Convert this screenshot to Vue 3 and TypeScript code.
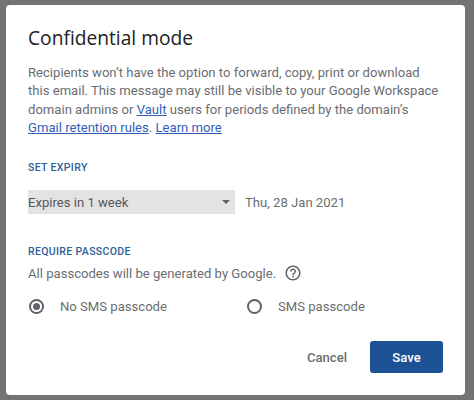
<script setup lang="ts">
const title = 'Confidential mode'
</script>

<template>
  <div class="page">
    <section class="dialog">
      <h1 class="title">{{ title }}</h1>
      <p class="body">
        Recipients won’t have the option to forward, copy, print or download<br />
        this email. This message may still be visible to your Google Workspace<br />
        domain admins or <a>Vault</a> users for periods defined by the domain’s<br />
        <a>Gmail retention rules</a>. <a>Learn more</a>
      </p>
      <h2 class="label expiry-label">SET EXPIRY</h2>
      <div class="expiry-row">
        <div class="select">
          <span>Expires in 1 week</span>
          <i class="caret"></i>
        </div>
        <span class="date">Thu, 28 Jan 2021</span>
      </div>
      <h2 class="label pass-label">REQUIRE PASSCODE</h2>
      <div class="note">
        <span>All passcodes will be generated by Google.</span>
        <svg class="help" width="18" height="18" viewBox="0 0 24 24" fill="#5f6368">
          <path d="M11 18h2v-2h-2v2zm1-16C6.48 2 2 6.48 2 12s4.48 10 10 10 10-4.48 10-10S17.52 2 12 2zm0 18c-4.41 0-8-3.59-8-8s3.59-8 8-8 8 3.59 8 8-3.59 8-8 8zm0-14c-2.21 0-4 1.79-4 4h2c0-1.1.9-2 2-2s2 .9 2 2c0 2-3 1.75-3 5h2c0-2.25 3-2.5 3-5 0-2.21-1.79-4-4-4z" />
        </svg>
      </div>
      <div class="radios">
        <div class="radio-item first">
          <span class="radio checked"></span>
          <span>No SMS passcode</span>
        </div>
        <div class="radio-item">
          <span class="radio"></span>
          <span>SMS passcode</span>
        </div>
      </div>
      <div class="actions">
        <button class="cancel">Cancel</button>
        <button class="save">Save</button>
      </div>
    </section>
  </div>
</template>

<style>
html, body { margin: 0; background: #737373; }
</style>

<style scoped>
.page {
  width: 474px;
  height: 400px;
  box-sizing: border-box;
  padding: 5px 9px 5px 6px;
  background: #737373;
  font-family: Roboto, "Liberation Sans", sans-serif;
  overflow: hidden;
}
.dialog {
  height: 390px;
  box-sizing: border-box;
  padding: 19px 22px 0;
  background: #fff;
  border-radius: 4px;
  color: #6a6d71;
  font-size: 13.1px;
}
.title {
  margin: 0;
  font-family: "Open Sans", Roboto, sans-serif;
  font-weight: 400;
  font-size: 19.2px;
  line-height: 28px;
  color: #202124;
}
.body {
  margin: 12px 0 0;
  line-height: 18.3px;
  white-space: nowrap;
}
.body a {
  color: #2f5fb5;
  text-decoration: underline;
}
.label {
  margin: 0;
  font-size: 10.5px;
  font-weight: 500;
  line-height: 14px;
  letter-spacing: 0.35px;
  color: #2d5f99;
}
.expiry-label { margin-top: 24px; }
.expiry-row {
  display: flex;
  align-items: center;
  margin-top: 15px;
}
.select {
  width: 207px;
  height: 24px;
  display: flex;
  align-items: center;
  justify-content: space-between;
  box-sizing: border-box;
  padding-right: 5px;
  background: #e3e3e3;
  color: #55585b;
}
.caret {
  width: 0;
  height: 0;
  border-left: 4px solid transparent;
  border-right: 4px solid transparent;
  border-top: 4px solid #5f6368;
}
.date { margin-left: 10px; }
.pass-label { margin-top: 31px; }
.note {
  display: flex;
  align-items: center;
  height: 20px;
  margin-top: 4px;
}
.help { margin-left: 8px; }
.radios {
  display: flex;
  align-items: center;
  margin-top: 13px;
}
.radio-item {
  display: flex;
  align-items: center;
  gap: 16px;
  height: 20px;
}
.radio-item.first { width: 218px; padding-left: 1px; }
.radio {
  width: 15px;
  height: 15px;
  border: 2px solid #5f6368;
  border-radius: 50%;
  box-sizing: border-box;
  display: block;
  padding: 2px;
  background-clip: content-box;
}
.radio.checked { background-color: #5f6368; }
.actions {
  display: flex;
  justify-content: flex-end;
  align-items: center;
  margin-top: 25px;
  gap: 23px;
}
button {
  font-family: inherit;
  font-size: 13.1px;
  border: 0;
  padding: 0;
  background: none;
}
.cancel {
  color: #6a6d71;
  font-weight: 500;
}
.save {
  width: 73px;
  height: 32px;
  background: #1d5295;
  color: #fff;
  font-weight: 500;
  border-radius: 3px;
}
</style>
